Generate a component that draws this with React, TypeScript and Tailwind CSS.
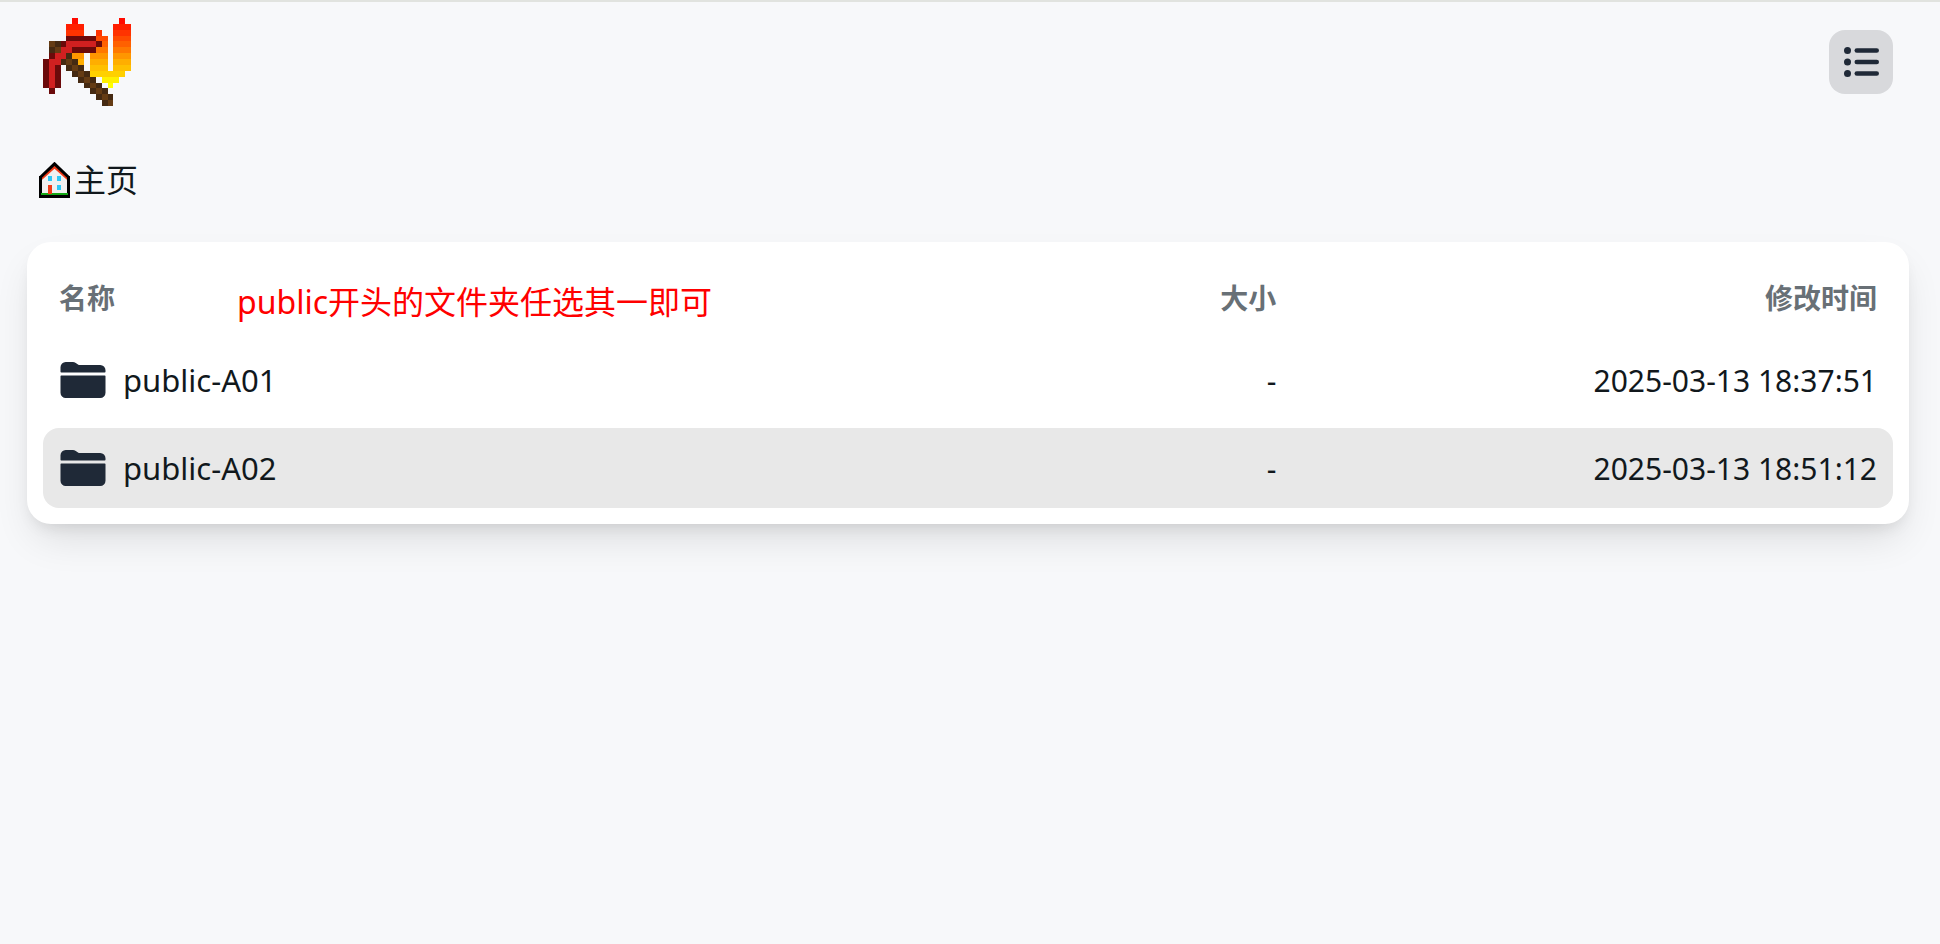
import React from 'react';
import { IoFolder } from 'react-icons/io5';

interface FileItem {
  name: string;
  size: string;
  modified: string;
}

const files: FileItem[] = [
  { name: 'public-A01', size: '-', modified: '2025-03-13 18:37:51' },
  { name: 'public-A02', size: '-', modified: '2025-03-13 18:51:12' },
];

// r/R: pickaxe head, b/B: handle, f: flame (coloured by row)
const logoRows = [
  '.....f.......f.',
  '....fff.....fff',
  '....fff..f..fff',
  '....RRRRRff.fff',
  '.bBRrrrrrRf.fff',
  '.BbrrRRRRff.fff',
  '.RrrBff.fff.fff',
  'RrrBbBf.fff.fff',
  'RrR.BbB.fff.fff',
  'RrR..BbBffffff.',
  'RrR...BbB.fff..',
  'RrR....BbB.f...',
  '.R......BbB....',
  '.........BbB...',
  '..........Bb...',
];

const flameColors = [
  '#ff0a00', '#ff1e00', '#ff3300', '#ff4b00', '#ff6000', '#ff7800', '#ff9600', '#ffae00',
  '#ffc000', '#ffd000', '#fff000', '#ffff00',
];

const logoColors: Record<string, string> = {
  r: '#d02020',
  R: '#6b0a0a',
  b: '#653c14',
  B: '#452a12',
};

function Logo() {
  return (
    <svg viewBox="0 0 15 15" className="size-[88px]" shapeRendering="crispEdges" role="img" aria-label="logo">
      {logoRows.map((row, y) =>
        row.split('').map((cell, x) =>
          cell === '.' ? null : (
            <rect
              key={`${x}-${y}`}
              x={x}
              y={y}
              width="1"
              height="1"
              fill={cell === 'f' ? flameColors[y] : logoColors[cell]}
            />
          )
        )
      )}
    </svg>
  );
}

function HouseIcon() {
  return (
    <svg viewBox="0 0 31 36" className="h-9 w-[31px]" aria-hidden="true">
      <path d="M3 15 15.5 4 28 15V33H3Z" fill="#f0f0f0" />
      <path d="M2 17 15.5 5 29 17" fill="none" stroke="#f03a17" strokeWidth="2.5" />
      <path d="M1.2 15.5 15.5 1.8 29.8 15.5" fill="none" stroke="#000" strokeWidth="3" />
      <path d="M0 14h3v19H0ZM28 14h3v19h-3Z" fill="#000" />
      <path d="M2 31h27v2H2Z" fill="#16a816" />
      <path d="M0 33h31v3H0Z" fill="#000" />
      <path d="M7 30h8v1H7Z" fill="#f0f0f0" />
      <path d="M9 23h4v9H9Z" fill="#f03a17" />
      <path d="M9 14h4v5H9ZM18 14h4v5h-4ZM18 23h4v5h-4Z" fill="#30c8f5" />
    </svg>
  );
}

function ListIcon() {
  return (
    <svg viewBox="0 0 36 30" className="h-[30px] w-9" fill="#1f2937" aria-hidden="true">
      {[3.5, 15, 26.5].map((y) => (
        <g key={y}>
          <circle cx="4.5" cy={y} r="3.5" />
          <rect x="11.5" y={y - 2.3} width="24.5" height="4.6" rx="2.3" />
        </g>
      ))}
    </svg>
  );
}

export default function App() {
  return (
    <div className="min-h-screen border-t-2 border-[#e1e3df] bg-[#f7f8fa] pr-[31px] pl-[27px] font-['Noto_Sans','Noto_Sans_CJK_SC',sans-serif] text-[#11181c]">
      <header className="flex h-[120px] items-center justify-between px-4">
        <Logo />
        <button
          type="button"
          aria-label="列表视图"
          className="flex size-16 items-center justify-center rounded-2xl bg-[#d8d9dc]"
        >
          <ListIcon />
        </button>
      </header>

      <nav className="px-3 pt-8 pb-9">
        <a href="#" className="inline-flex h-[52px] items-center gap-1 align-top text-[32px]">
          <HouseIcon />
          <span className="pb-1 font-['Noto_Sans_CJK_SC',sans-serif]">主页</span>
        </a>
      </nav>

      <main className="relative rounded-3xl bg-white px-4 py-2 shadow-[0_20px_40px_-8px_rgba(0,0,0,0.12),0_8px_16px_-6px_rgba(0,0,0,0.1)]">
        <table className="w-full table-fixed border-separate border-spacing-x-0 border-spacing-y-2 text-[30px]">
          <thead>
            <tr className="h-[74px] text-[28px] text-[#687076]">
              <th className="w-1/2 pt-1.5 pl-4 text-left font-bold">名称</th>
              <th className="w-1/6 pt-1.5 text-right font-bold">大小</th>
              <th className="w-1/3 pt-1.5 pr-4 text-right font-bold">修改时间</th>
            </tr>
          </thead>
          <tbody>
            {files.map((file, i) => {
              const bg = i === 1 ? 'bg-[#e8e8e8]' : '';
              return (
                <tr key={file.name} className="h-20">
                  <td className={`rounded-l-2xl p-0 pl-4 ${bg}`}>
                    <a href="#" className="flex items-center gap-4 text-[31px]">
                      <IoFolder className="size-12 text-[#1f2937]" />
                      {file.name}
                    </a>
                  </td>
                  <td className={`p-0 text-right ${bg}`}>{file.size}</td>
                  <td className={`rounded-r-2xl p-0 pr-4 text-right ${bg}`}>{file.modified}</td>
                </tr>
              );
            })}
          </tbody>
        </table>
        <p className="absolute top-9 left-[210px] text-[32px] text-[#ff0000]">public开头的文件夹任选其一即可</p>
      </main>
    </div>
  );
}
